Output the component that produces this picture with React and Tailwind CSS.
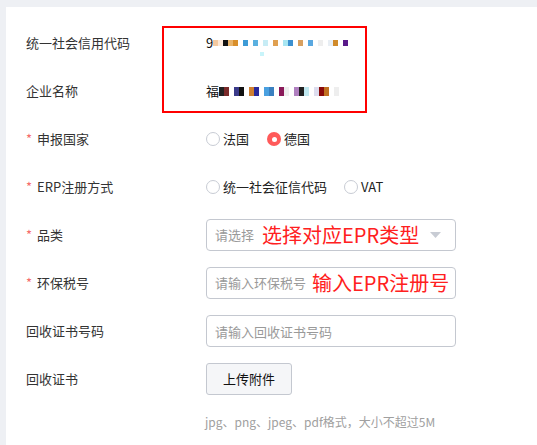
import React from 'react'

const font = { fontFamily: '"Noto Sans CJK SC", "Liberation Sans", sans-serif' }

// blurred (mosaic) values
const mosaic1 = ['#f3c9a0','#fde9d8','#111','#e9b46a','#d98f2a','#fff','#3d9bd6','#fff','#5ab0e0','#fff','#c7ecf5','#fff','#e0a050','#fff','#a8e6f2','#3b90d0','#fff','#d8a060','#fff','#5aa8e0','#fff','#eee','#fff','#e8eef4','#d08a2a','#fff','#5a1a8a']
const mosaic2 = ['#222','#7a2a2a','#fff','#3b3b8a','#111','#fff','#d08030','#2a2a9a','#fff','#4aa0e0','#3a80c0','#fff','#8a1a5a','#eee','#fff','#b080c0','#222','#c0e8f0','#fff','#dde','#8a0a0a','#c07020','#fff','#eee']

function Mosaic({ first, cells, tall }) {
  return (
    <div className="flex items-center text-[13px] text-[#111]">
      <span>{first}</span>
      <div className="flex items-center">
        {cells.map((c, i) => (
          <span key={i} className={tall ? 'w-[5px] h-[9px]' : 'w-[5px] h-[6px]'} style={{ backgroundColor: c }}></span>
        ))}
      </div>
    </div>
  )
}

function Radio({ checked, label }) {
  return (
    <label className="flex items-center gap-[3px] text-[13px] text-[#222]">
      {checked ? (
        <span className="w-[14px] h-[14px] rounded-full bg-[#ff5a5a] flex items-center justify-center">
          <span className="w-[5px] h-[5px] rounded-full bg-white"></span>
        </span>
      ) : (
        <span className="w-[14px] h-[14px] rounded-full border border-[#c8ccd4] bg-white"></span>
      )}
      <span>{label}</span>
    </label>
  )
}

function Row({ label, required, children }) {
  return (
    <div className="flex items-center h-[48px]">
      <div className="w-[180px] flex items-center text-[13px] text-[#333]">
        {required && <span className="text-[#f56c6c] w-[11px]">*</span>}
        <span>{label}</span>
      </div>
      <div className="flex items-center">{children}</div>
    </div>
  )
}

export default function App() {
  return (
    <div className="w-[537px] h-[445px] bg-[#eef0f4] pl-[6px] pt-[7px] overflow-hidden" style={font}>
      <div className="relative bg-white h-full pl-[20px] pt-[12px]">
        {/* annotation box */}
        <div className="absolute left-[156px] top-[19px] w-[205px] h-[87px] border-2 border-[#ff0000]"></div>

        <Row label="统一社会信用代码">
          <div className="relative">
            <Mosaic first="9" cells={mosaic1} />
            <span className="absolute left-[54px] top-[19px] w-[4px] h-[4px] bg-[#c8f4fa]"></span>
          </div>
        </Row>
        <Row label="企业名称">
          <Mosaic first="福" cells={mosaic2} tall />
        </Row>
        <Row label="申报国家" required>
          <div className="flex items-center gap-[18px]">
            <Radio label="法国" />
            <Radio label="德国" checked />
          </div>
        </Row>
        <Row label="ERP注册方式" required>
          <div className="flex items-center gap-[17px]">
            <Radio label="统一社会征信代码" />
            <Radio label="VAT" />
          </div>
        </Row>
        <Row label="品类" required>
          <div className="w-[250px] h-[32px] border border-[#c4c8d0] rounded-[4px] flex items-center pl-[8px] pr-[14px]">
            <span className="text-[13px] text-[#9a9a9a]">请选择</span>
            <span className="ml-[8px] text-[20px] text-[#ff2020] leading-none">选择对应EPR类型</span>
            <svg className="ml-auto" width="11" height="6" viewBox="0 0 11 6">
              <path d="M0 0 L11 0 L5.5 6 Z" fill="#c8ccd4" />
            </svg>
          </div>
        </Row>
        <Row label="环保税号" required>
          <div className="w-[250px] h-[32px] border border-[#c4c8d0] rounded-[4px] flex items-center pl-[8px]">
            <span className="text-[13px] text-[#9a9a9a]">请输入环保税号</span>
            <span className="ml-[6px] text-[20px] text-[#ff2020] leading-none">输入EPR注册号</span>
          </div>
        </Row>
        <Row label="回收证书号码">
          <input
            className="w-[250px] h-[32px] border border-[#c4c8d0] rounded-[4px] px-[8px] text-[13px] outline-none placeholder:text-[#9a9a9a]"
            placeholder="请输入回收证书号码"
          />
        </Row>
        <Row label="回收证书">
          <button className="w-[86px] h-[32px] border border-[#c4c8d0] rounded-[3px] bg-[#f5f6f8] text-[13px] text-[#111]">
            上传附件
          </button>
        </Row>
        <div className="pl-[179px] pt-[10px] text-[12px] text-[#a0a0a0]">jpg、png、jpeg、pdf格式，大小不超过5M</div>
      </div>
    </div>
  )
}
